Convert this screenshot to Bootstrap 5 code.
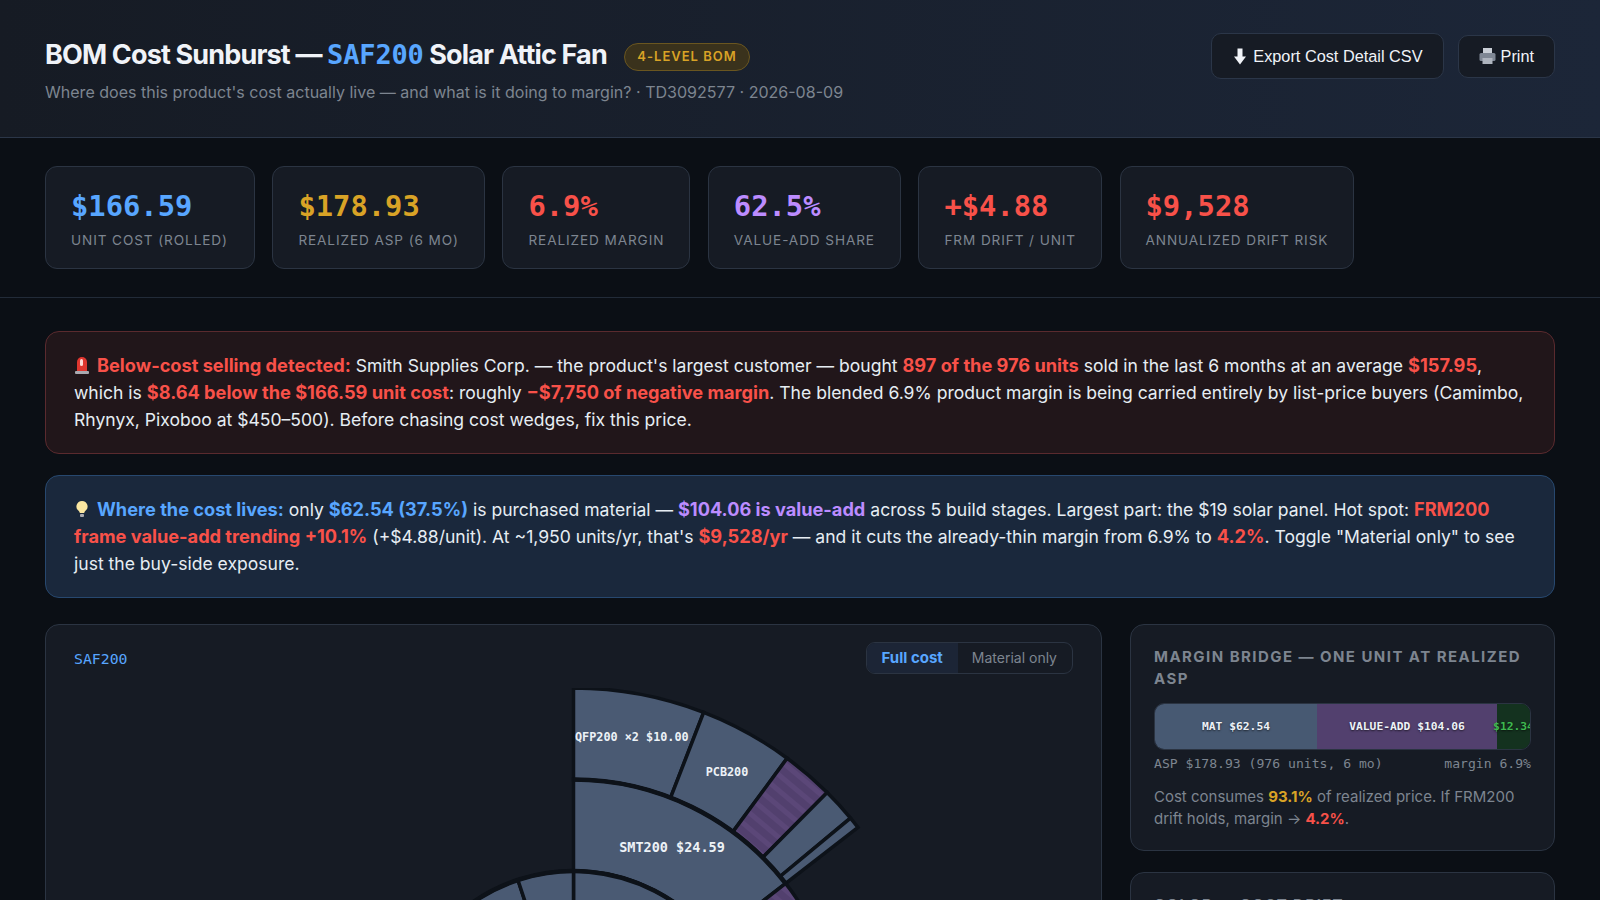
<!DOCTYPE html>
<html lang="en">
<head>
    <meta charset="UTF-8">
    <meta name="viewport" content="width=device-width, initial-scale=1.0">
    <title>BOM Cost Sunburst</title>
    <link href="https://cdn.jsdelivr.net/npm/bootstrap@5.3.0/dist/css/bootstrap.min.css" rel="stylesheet">
    <style>
        html, body { height: 900px; overflow: hidden; }
        body { background: #0b0f15; color: #e6edf3; font-family: Inter, "Liberation Sans", sans-serif; }
        .mono { font-family: "DejaVu Sans Mono", monospace; }
        .c-blue { color: #58a6ff; }
        .c-amber { color: #d9a326; }
        .c-red { color: #f85149; }
        .c-purple { color: #bc8cff; }

        .page-head { height: 138px; padding: 39px 45px 0; background: linear-gradient(90deg, #161b24, #1c2638); border-bottom: 1px solid #2b3648; }
        .page-title { font-size: 27px; font-weight: 700; letter-spacing: -0.85px; line-height: 32px; margin: 0; color: #f0f3f8; }
        .page-title .mono { letter-spacing: -0.15px; }
        .head-badge { font-size: 13px; font-weight: 600; letter-spacing: 1px; color: #d9a326; background: #3a321c; border: 1px solid #6a5620; border-radius: 14px; height: 28px; padding: 0 12.5px; display: inline-flex; align-items: center; margin: 4px 0 0 17px; }
        .page-sub { font-size: 16.04px; color: #7d8590; margin-top: 9px; line-height: 24px; }
        .head-actions { margin-top: -6px; height: 46px; gap: 14px; }
        .head-btn.btn { --bs-btn-color: #f0f3f8; --bs-btn-bg: #161b24; --bs-btn-border-color: #2b3648; --bs-btn-hover-color: #f0f3f8; --bs-btn-hover-bg: #1e2532; --bs-btn-hover-border-color: #2b3648; font-family: "Liberation Sans", sans-serif; font-size: 16.3px; border-radius: 10px; display: inline-flex; align-items: center; gap: 6px; padding: 0 20px 0 21px; }
        .btn-export { height: 46px; }
        .btn-print { height: 43px; gap: 5px !important; padding-left: 20px !important; }

        .kpi-band { height: 160px; padding: 28px 45px 0; border-bottom: 1px solid #222b38; gap: 17.5px; }
        .kpi-box { height: 103px; padding: 22px 25px 0; background: #161b24; border: 1px solid #2b3442; border-radius: 12px; }
        .kpi-box:first-child { padding-right: 26px; }
        .kpi-val { font-size: 28.8px; font-weight: 700; line-height: 34px; }
        .kpi-lab { font-size: 13.6px; letter-spacing: 0.9px; color: #7d8590; text-transform: uppercase; margin-top: 7px; line-height: 20px; white-space: nowrap; }

        .note-wrap { padding: 33px 45px 0; }
        .note-box { height: 123px; padding: 20px 28px 0; border-radius: 14px; font-size: 17.56px; line-height: 27px; color: #e6edf3; margin-bottom: 21px; }
        .note-red { background: #21161a; border: 1px solid #5a2a2e; }
        .note-blue { background: #1a283c; border: 1px solid #27486f; }
        .note-box b { font-weight: 700; font-size: 18.2px; }
        .note-ico { vertical-align: -2px; margin-right: 7px; }

        .main-grid { display: grid; grid-template-columns: 1057px 425px; gap: 28px; padding: 5px 45px 0; }
        .panel.card { --bs-card-bg: #161b24; --bs-card-border-color: #2b3442; --bs-card-border-radius: 14px; --bs-card-color: #e6edf3; }
        .burst-panel { padding: 17px 28px 28px; }
        .seg-btn.btn { --bs-btn-color: #7d8590; --bs-btn-bg: transparent; --bs-btn-border-color: transparent; --bs-btn-hover-color: #a0a8b2; --bs-btn-hover-bg: transparent; --bs-btn-hover-border-color: transparent; --bs-btn-active-bg: #1c2536; --bs-btn-active-color: #58a6ff; --bs-btn-active-border-color: transparent; font-size: 14px; padding: 0 15px; height: 30px; border-radius: 0; line-height: 30px; border: 0; }
        .seg-btn.active { font-weight: 700; font-size: 15px; }
        .seg-group { border: 1px solid #2b3442; border-radius: 9px; overflow: hidden; background: #161b24; }
        .burst-name { font-size: 14.8px; padding-top: 2px; }
        .burst-svg { display: block; margin-top: 14px; }
        .burst-svg text { font-family: "DejaVu Sans Mono", monospace; font-weight: 700; fill: #edf2f7; }

        .side-panel { padding: 21px 23px 20px; }
        .second-panel { margin-top: 21px; }
        .side-title { font-size: 15px; font-weight: 700; letter-spacing: 1.45px; line-height: 22px; color: #7d8590; text-transform: uppercase; margin: 0; }
        .bridge-bar { height: 47px; margin-top: 13px; border: 1px solid #2b3442; border-radius: 10px; overflow: hidden; }
        .bridge-seg { display: flex; align-items: center; justify-content: center; white-space: nowrap; font-size: 11.3px; font-weight: 700; color: #edf2f7; text-shadow: 0 1px 2px rgba(0,0,0,.6); padding-top: 2px; }
        .seg-mat { background: #475972; }
        .seg-va { background: #52406e; }
        .seg-mar { background: #14321f; color: #3fb950; }
        .bridge-foot { font-size: 13.1px; color: #7d8590; line-height: 20px; margin-top: 4px; }
        .side-text { font-size: 15px; line-height: 22px; color: #7d8590; margin: 12px 0 0; }
        .side-text b { font-weight: 700; }
    </style>
</head>
<body>
    <header class="page-head d-flex align-items-start justify-content-between">
        <div>
            <div class="d-flex align-items-center">
                <h1 class="page-title">BOM Cost Sunburst — <span class="mono c-blue">SAF200</span> Solar Attic Fan</h1>
                <span class="head-badge">4-LEVEL BOM</span>
            </div>
            <div class="page-sub">Where does this product's cost actually live — and what is it doing to margin? · TD3092577 · 2026-08-09</div>
        </div>
        <div class="head-actions d-flex align-items-center">
            <button class="btn head-btn btn-export">
                <svg width="14" height="19" viewBox="0 0 14 18"><path d="M4.5 1h5v8H13l-6 8-6-8h3.5z" fill="#f0f3f8"/></svg>
                Export Cost Detail CSV
            </button>
            <button class="btn head-btn btn-print">
                <svg width="17" height="18" viewBox="0 0 17 18"><rect x="4" y="1" width="9" height="6" fill="#c9ced6"/><rect x="0.5" y="6" width="16" height="8" rx="1.5" fill="#7f8794"/><rect x="3.5" y="11" width="10" height="6" fill="#aeb4be"/></svg>
                Print
            </button>
        </div>
    </header>

    <section class="kpi-band d-flex align-items-start">
        <div class="kpi-box"><div class="kpi-val mono c-blue">$166.59</div><div class="kpi-lab">Unit cost (rolled)</div></div>
        <div class="kpi-box"><div class="kpi-val mono c-amber">$178.93</div><div class="kpi-lab">Realized ASP (6 mo)</div></div>
        <div class="kpi-box"><div class="kpi-val mono c-red">6.9%</div><div class="kpi-lab">Realized margin</div></div>
        <div class="kpi-box"><div class="kpi-val mono c-purple">62.5%</div><div class="kpi-lab">Value-add share</div></div>
        <div class="kpi-box"><div class="kpi-val mono c-red">+$4.88</div><div class="kpi-lab">FRM drift / unit</div></div>
        <div class="kpi-box"><div class="kpi-val mono c-red">$9,528</div><div class="kpi-lab">Annualized drift risk</div></div>
    </section>

    <section class="note-wrap">
        <div class="note-box note-red">
            <svg class="note-ico" width="16" height="18" viewBox="0 0 16 18"><rect x="1" y="15" width="14" height="3" rx="1" fill="#a9a9b0"/><path d="M3 15V6a5 5 0 0 1 10 0v9z" fill="#e0362f"/><rect x="6" y="3" width="3" height="7" rx="1.5" fill="#ffd9d6"/></svg><b class="c-red">Below-cost selling detected:</b> Smith Supplies Corp. — the product's largest customer — bought <b class="c-red">897 of the 976 units</b> sold in the last 6 months at an average <b class="c-red">$157.95</b>, which is <b class="c-red">$8.64 below the $166.59 unit cost</b>: roughly <b class="c-red">−$7,750 of negative margin</b>. The blended 6.9% product margin is being carried entirely by list-price buyers (Camimbo, Rhynyx, Pixoboo at $450–500). Before chasing cost wedges, fix this price.
        </div>
        <div class="note-box note-blue">
            <svg class="note-ico" width="16" height="18" viewBox="0 0 16 18"><path d="M8 1a5.5 5.5 0 0 0-3.2 10c.6.5.9 1.2 1 2h4.4c.1-.8.4-1.5 1-2A5.5 5.5 0 0 0 8 1z" fill="#fbe7a1"/><rect x="6" y="14" width="4" height="3" rx="1" fill="#a9a9b0"/></svg><b class="c-blue">Where the cost lives:</b> only <b class="c-blue">$62.54 (37.5%)</b> is purchased material — <b class="c-purple">$104.06 is value-add</b> across 5 build stages. Largest part: the $19 solar panel. Hot spot: <b class="c-red">FRM200 frame value-add trending +10.1%</b> (+$4.88/unit). At ~1,950 units/yr, that's <b class="c-red">$9,528/yr</b> — and it cuts the already-thin margin from 6.9% to <b class="c-red">4.2%</b>. Toggle "Material only" to see just the buy-side exposure.
        </div>
    </section>

    <section class="main-grid">
        <div class="card panel burst-panel">
            <div class="d-flex align-items-center justify-content-between">
                <span class="burst-name mono c-blue">SAF200</span>
                <div class="btn-group seg-group">
                    <button class="btn seg-btn active">Full cost</button>
                    <button class="btn seg-btn">Material only</button>
                </div>
            </div>
            <svg class="burst-svg" id="burst" width="1001" height="740" viewBox="0 0 1001 740"></svg>
        </div>
        <div class="d-flex flex-column">
            <div class="card panel side-panel">
                <h2 class="side-title">Margin bridge — one unit at realized ASP</h2>
                <div class="bridge-bar d-flex mono">
                    <div class="bridge-seg seg-mat" style="width: 43.2%">MAT $62.54</div>
                    <div class="bridge-seg seg-va" style="width: 48%">VALUE-ADD $104.06</div>
                    <div class="bridge-seg seg-mar" style="width: 8.8%">$12.34</div>
                </div>
                <div class="bridge-foot mono d-flex justify-content-between"><span>ASP $178.93 (976 units, 6 mo)</span><span>margin 6.9%</span></div>
                <p class="side-text">Cost consumes <b class="c-amber">93.1%</b> of realized price. If FRM200 drift holds, margin → <b class="c-red">4.2%</b>.</p>
            </div>
            <div class="card panel side-panel second-panel">
                <h2 class="side-title">Color — cost drift</h2>
            </div>
        </div>
    </section>

    <script>
        const cx = 499.5, cy = 360;
        const svg = document.getElementById('burst');
        const slate = '#4a5a73';
        const dark = '#0d1219';
        const r1 = 177, r2 = 268.5, r3 = 360;
        // ring: inner, outer, from deg, to deg, kind
        const wedges = [
            [r2, r3, 0, 21.2, 's'], [r2, r3, 21.2, 36.4, 's'], [r2, r3, 36.4, 44.8, 'p'], [r2, r3, 44.8, 50.3, 's'], [r2, r3, 50.3, 52.2, 's'],
            [r1, r2, 0, 52.2, 's'], [r1, r2, 52.2, 95, 'p'], [r1, r2, 95, 140, 's'], [r1, r2, 140, 220, 's'],
            [90, r1, 0, 62, 's'], [90, r1, 62, 150, 's'], [90, r1, 150, 235, 's'], [90, r1, -38, -18.3, 's'], [90, r1, -18.3, 0, 's'],
        ];

        function pt(r, deg) {
            const a = deg * Math.PI / 180;
            return (cx + r * Math.sin(a)).toFixed(2) + ' ' + (cy - r * Math.cos(a)).toFixed(2);
        }

        function wedgePath(r0, r, a0, a1) {
            const large = a1 - a0 > 180 ? 1 : 0;
            return `M${pt(r0, a0)}L${pt(r, a0)}A${r} ${r} 0 ${large} 1 ${pt(r, a1)}L${pt(r0, a1)}A${r0} ${r0} 0 ${large} 0 ${pt(r0, a0)}Z`;
        }

        function ringGap(r, a0, a1) {
            return `<path d="M${pt(r, a0)}A${r} ${r} 0 ${a1 - a0 > 180 ? 1 : 0} 1 ${pt(r, a1)}" fill="none" stroke="${dark}" stroke-width="4.5"/>`;
        }

        let html = `<defs><pattern id="stripes" width="12" height="12" patternUnits="userSpaceOnUse" patternTransform="rotate(-50)">
            <rect width="12" height="12" fill="#52406e"/><rect width="5" height="12" fill="#5b4778"/></pattern></defs>`;
        wedges.forEach(w => {
            const fill = w[4] === 'p' ? 'url(#stripes)' : slate;
            html += `<path d="${wedgePath(w[0], w[1], w[2], w[3])}" fill="${fill}" stroke="${dark}" stroke-width="3.5"/>`;
        });
        html += ringGap(r2, 0, 52.2) + ringGap(r1, -38, 220);
        html += `<text x="501" y="53" font-size="11.8">QFP200 ×2 $10.00</text>`;
        html += `<text x="653" y="88" font-size="11.8" text-anchor="middle">PCB200</text>`;
        html += `<text x="598" y="164" font-size="13.5" text-anchor="middle">SMT200 $24.59</text>`;
        svg.innerHTML = html;
    </script>
    <script src="https://cdn.jsdelivr.net/npm/bootstrap@5.3.0/dist/js/bootstrap.bundle.min.js"></script>
</body>
</html>
